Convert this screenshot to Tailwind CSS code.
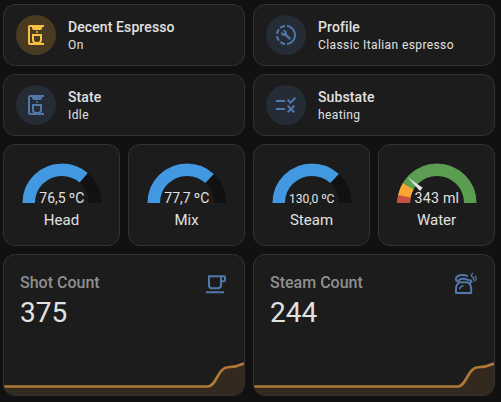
<!DOCTYPE html>
<html lang="en">
<head>
<meta charset="utf-8">
<title>Decent Espresso</title>
<script src="https://cdn.jsdelivr.net/npm/@tailwindcss/browser@4"></script>
</head>
<body class="w-[501px] h-[402px] overflow-hidden bg-[#111111] text-[#e1e1e1] font-['Roboto',sans-serif]">
<svg class="hidden">
  <symbol id="maker" viewBox="0 0 24 24">
    <path fill="currentColor" d="M20 2H6a2 2 0 0 0-2 2v16a2 2 0 0 0 2 2h14v-2h-3.4A4 4 0 0 0 18 17v-6H8v6a4 4 0 0 0 1.4 3H6V4h2v1a2 2 0 0 0 2 2h6a2 2 0 0 0 2-2V4h2zM10 13h6v4a2 2 0 0 1-2 2h-2a2 2 0 0 1-2-2z"/>
    <circle cx="13" cy="9" r="1" fill="currentColor"/>
  </symbol>
</svg>
<main class="grid grid-cols-4 grid-rows-[62px_62px_102px_142px] gap-2 w-[492px] ml-[3px] pt-1">
  <section class="col-span-2 flex items-center gap-3 px-3 rounded-xl border border-[#333333] bg-[#1c1c1c]">
    <div class="size-10 rounded-full bg-[#483b22] text-[#fbc147] flex items-center justify-center"><svg class="size-6"><use href="#maker"/></svg></div>
    <div class="flex flex-col"><span class="text-sm leading-5 font-medium tracking-[0.1px]">Decent Espresso</span><span class="text-xs leading-4 tracking-[0.4px]">On</span></div>
  </section>
  <section class="col-span-2 flex items-center gap-3 px-3 rounded-xl border border-[#333333] bg-[#1c1c1c]">
    <div class="size-10 rounded-full bg-[#252c35] text-[#5078ab] flex items-center justify-center"><svg class="size-6" viewBox="0 0 24 24"><path fill="currentColor" d="M13 2.03V4.05C17.39 4.59 20.5 8.58 19.96 12.97C19.5 16.61 16.64 19.5 13 19.93V21.93C18.5 21.38 22.5 16.5 21.95 11C21.5 6.25 17.73 2.5 13 2.03M11 2.06C9.05 2.25 7.19 3 5.67 4.26L7.1 5.74C8.22 4.84 9.57 4.26 11 4.06V2.06M4.26 5.67C3 7.19 2.25 9.04 2.05 11H4.05C4.24 9.58 4.8 8.23 5.69 7.1L4.26 5.67M2.06 13C2.26 14.96 3.03 16.81 4.27 18.33L5.69 16.9C4.81 15.77 4.24 14.42 4.06 13H2.06M7.1 18.37L5.67 19.74C7.18 21 9.04 21.79 11 22V20C9.58 19.82 8.23 19.25 7.1 18.37M16.82 15.19L12.71 11.08C13.12 10.04 12.89 8.82 12.03 7.97C11.13 7.06 9.78 6.88 8.69 7.38L10.63 9.32L9.28 10.68L7.29 8.73C6.75 9.82 7 11.17 7.88 12.08C8.74 12.94 9.96 13.16 11 12.76L15.11 16.86C15.29 17.05 15.56 17.05 15.74 16.86L16.78 15.83C17 15.65 17 15.33 16.82 15.19Z"/></svg></div>
    <div class="flex flex-col"><span class="text-sm leading-5 font-medium tracking-[0.1px]">Profile</span><span class="text-xs leading-4 tracking-[0.4px]">Classic Italian espresso</span></div>
  </section>
  <section class="col-span-2 flex items-center gap-3 px-3 rounded-xl border border-[#333333] bg-[#1c1c1c]">
    <div class="size-10 rounded-full bg-[#252c35] text-[#5078ab] flex items-center justify-center"><svg class="size-6"><use href="#maker"/></svg></div>
    <div class="flex flex-col"><span class="text-sm leading-5 font-medium tracking-[0.1px]">State</span><span class="text-xs leading-4 tracking-[0.4px]">Idle</span></div>
  </section>
  <section class="col-span-2 flex items-center gap-3 px-3 rounded-xl border border-[#333333] bg-[#1c1c1c]">
    <div class="size-10 rounded-full bg-[#252c35] text-[#5078ab] flex items-center justify-center"><svg class="size-6" viewBox="0 0 24 24"><path fill="currentColor" d="M16.54 11L13 7.46l1.41-1.41 2.12 2.12 4.24-4.24 1.41 1.41zM11 7H2v2h9zm10 6.41L19.59 12 17 14.59 14.41 12 13 13.41 15.59 16 13 18.59 14.41 20 17 17.41 19.59 20 21 18.59 18.41 16zM11 15H2v2h9z"/></svg></div>
    <div class="flex flex-col"><span class="text-sm leading-5 font-medium tracking-[0.1px]">Substate</span><span class="text-xs leading-4 tracking-[0.4px]">heating</span></div>
  </section>

  <section class="flex flex-col items-center pt-[16px] rounded-xl border border-[#333333] bg-[#1c1c1c]">
    <svg class="w-[84px] h-[44px]" viewBox="-42 -42 84 44" fill="none" stroke-width="12.5">
      <path stroke="#111111" d="M-33.3 0A33.3 33.3 0 0 1 33.3 0"/>
      <path stroke="#4399e1" pathLength="100" stroke-dasharray="72.6 200" d="M-33.3 0A33.3 33.3 0 0 1 33.3 0"/>
      <text x="-.2" y="0" text-anchor="middle" fill="#e1e1e1" font-size="14" textLength="45">76,5 ºC</text>
    </svg>
    <span class="text-[15px] leading-5 mt-[5px]">Head</span>
  </section>
  <section class="flex flex-col items-center pt-[16px] rounded-xl border border-[#333333] bg-[#1c1c1c]">
    <svg class="w-[84px] h-[44px]" viewBox="-42 -42 84 44" fill="none" stroke-width="12.5">
      <path stroke="#111111" d="M-33.3 0A33.3 33.3 0 0 1 33.3 0"/>
      <path stroke="#4399e1" pathLength="100" stroke-dasharray="73.7 200" d="M-33.3 0A33.3 33.3 0 0 1 33.3 0"/>
      <text x="-.2" y="0" text-anchor="middle" fill="#e1e1e1" font-size="14" textLength="45">77,7 ºC</text>
    </svg>
    <span class="text-[15px] leading-5 mt-[5px]">Mix</span>
  </section>
  <section class="flex flex-col items-center pt-[16px] rounded-xl border border-[#333333] bg-[#1c1c1c]">
    <svg class="w-[84px] h-[44px]" viewBox="-42 -42 84 44" fill="none" stroke-width="12.5">
      <path stroke="#111111" d="M-33.3 0A33.3 33.3 0 0 1 33.3 0"/>
      <path stroke="#4399e1" pathLength="100" stroke-dasharray="73.7 200" d="M-33.3 0A33.3 33.3 0 0 1 33.3 0"/>
      <text x="-.2" y="0.2" text-anchor="middle" fill="#e1e1e1" font-size="12.2" textLength="45.5">130,0 ºC</text>
    </svg>
    <span class="text-[15px] leading-5 mt-[5px]">Steam</span>
  </section>
  <section class="flex flex-col items-center pt-[16px] rounded-xl border border-[#333333] bg-[#1c1c1c]">
    <svg class="w-[84px] h-[44px]" viewBox="-42 -42 84 44" fill="none" stroke-width="12.5">
      <path stroke="#5b9e51" d="M-33.3 0A33.3 33.3 0 0 1 33.3 0"/>
      <path stroke="#f9a633" pathLength="100" stroke-dasharray="16.7 200" d="M-33.3 0A33.3 33.3 0 0 1 33.3 0"/>
      <path stroke="#cb5043" pathLength="100" stroke-dasharray="6.5 200" d="M-33.3 0A33.3 33.3 0 0 1 33.3 0"/>
      <path fill="#e1e1e1" transform="rotate(41.2)" d="M-20.8-2.1L-39.5 0L-20.8 2.1z"/>
      <text x="-.2" y="0" text-anchor="middle" fill="#e1e1e1" font-size="14.2" textLength="44.5">343 ml</text>
    </svg>
    <span class="text-[15px] leading-5 mt-[5px]">Water</span>
  </section>

  <section class="col-span-2 flex flex-col justify-between overflow-hidden rounded-xl border border-[#333333] bg-[#1c1c1c]">
    <div class="flex justify-between pl-4 pr-4 pt-[17px]">
      <div class="flex flex-col"><span class="text-base leading-[22px] font-medium text-[#8f8f8f]">Shot Count</span><span class="text-[28px] leading-[38px]">375</span></div>
      <svg class="size-6 text-[#5078ab]" viewBox="0 -.3 24 24"><path fill="currentColor" d="M2,21V19H20V21H2M20,8V5H18V8H20M20,3A2,2 0 0,1 22,5V8A2,2 0 0,1 20,10H18V13A4,4 0 0,1 14,17H8A4,4 0 0,1 4,13V3H20M16,5H6V13A2,2 0 0,0 8,15H14A2,2 0 0,0 16,13V5Z"/></svg>
    </div>
    <svg class="w-full h-[35px]" viewBox="0 0 240 35" preserveAspectRatio="none">
      <path fill="#33291f" d="M0 26.5H204C212 26.5 214 7.5 224 7.3C230 7 235 5.8 240 3.5V35H0z"/>
      <path fill="none" stroke="#b07a36" stroke-width="2.6" d="M0 26.5H204C212 26.5 214 7.5 224 7.3C230 7 235 5.8 240 3.5"/>
    </svg>
  </section>
  <section class="col-span-2 flex flex-col justify-between overflow-hidden rounded-xl border border-[#333333] bg-[#1c1c1c]">
    <div class="flex justify-between pl-4 pr-4 pt-[17px]">
      <div class="flex flex-col"><span class="text-base leading-[22px] font-medium text-[#8f8f8f]">Steam Count</span><span class="text-[28px] leading-[38px]">244</span></div>
      <svg class="size-6 text-[#5078ab]" viewBox="0 0 24 24" fill="none" stroke="currentColor" stroke-width="2">
        <path d="M2 21V17C2 14 3.4 11.4 6 10.2H13.3C15.8 11.4 17.2 14 17.2 17V21z" stroke-linejoin="round"/>
        <path d="M4.2 9.6C1.6 9 1.2 6.5 2.6 5C4.6 3 9 2.6 14 4" stroke-width="2"/>
        <path d="M4.2 9.6C4.6 7.2 7 6.7 9.5 6.7C12.8 6.7 14 8.6 17.5 8.6M15.6 11.2L18.3 9"/>
        <path d="M5.8 17.3C6 15.2 7.3 13.9 9.4 13.7" stroke-width="1.5"/>
        <path d="M19 1C16.4 3.2 17.2 4.4 18.8 5.2C20.2 5.9 19.9 7 19 7.7M21 3.8C23 5.5 22.5 8.2 19.8 9.2" stroke-width="1.3"/>
      </svg>
    </div>
    <svg class="w-full h-[35px]" viewBox="0 0 240 35" preserveAspectRatio="none">
      <path fill="#33291f" d="M0 26.5H204C212 26.5 214 7.5 224 7.3C230 7 235 5.8 240 3.5V35H0z"/>
      <path fill="none" stroke="#b07a36" stroke-width="2.6" d="M0 26.5H204C212 26.5 214 7.5 224 7.3C230 7 235 5.8 240 3.5"/>
    </svg>
  </section>
</main>
</body>
</html>
